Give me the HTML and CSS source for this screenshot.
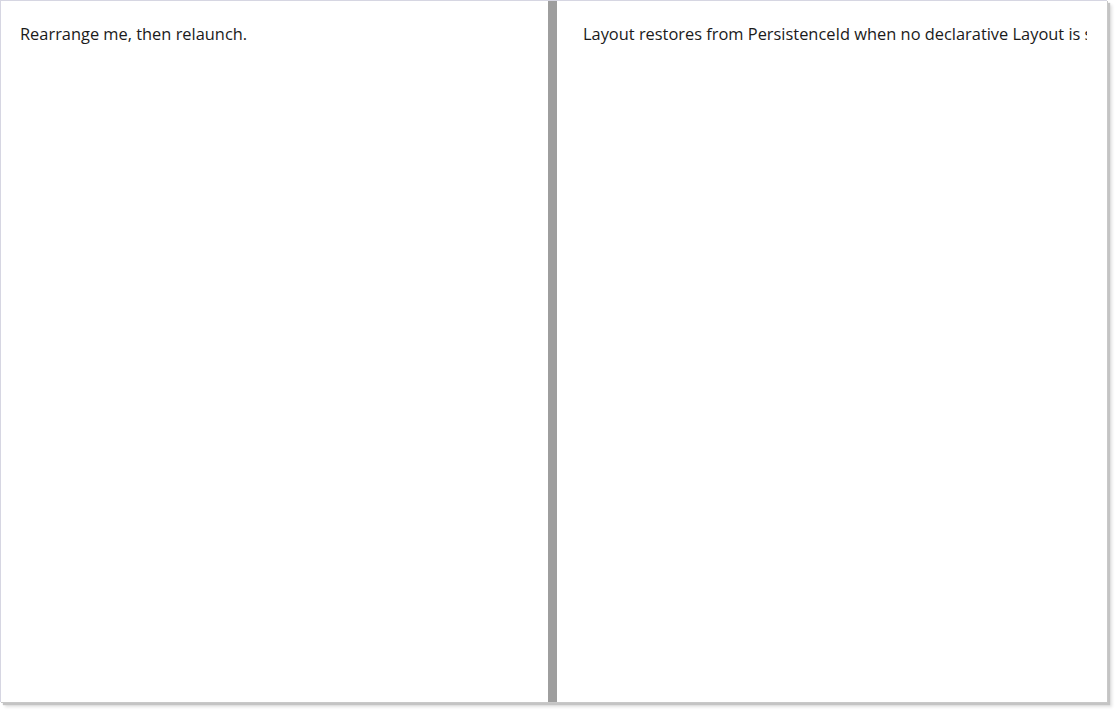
FILE: index.html
```html
<!DOCTYPE html>
<html>
<head>
<meta charset="utf-8">
<link rel="stylesheet" href="styles.css">
</head>
<body>
<div class="window">
  <div class="pane left">
    <div class="text">Rearrange me, then relaunch.</div>
  </div>
  <div class="splitter"></div>
  <div class="pane right">
    <div class="text">Layout restores from PersistenceId when no declarative Layout is set.</div>
  </div>
</div>
</body>
</html>
```
FILE: styles.css
```css
html, body {
  margin: 0;
  padding: 0;
  background: #ffffff;
}
body {
  height: 711px;
  box-sizing: border-box;
  padding-bottom: 9px;
}
.window {
  width: 1106px;
  height: 701px;
  border-top: 1px solid #d6d6e2;
  border-left: 1px solid #d6d6e2;
  background: #ffffff;
  display: flex;
  box-shadow: 1px 1px 0 #c8c8c8, 3px 3px 1px #c4c4c4, 5px 5px 3px rgba(0,0,0,0.12);
  font-family: "Open Sans", "Noto Sans", sans-serif;
  font-size: 16.4px;
  color: #1b1b1b;
}
.pane {
  overflow: hidden;
  box-sizing: border-box;
}
.left {
  width: 547px;
  padding: 22px 19px;
}
.splitter {
  width: 9px;
  background: #9e9e9e;
}
.right {
  flex: 1;
  padding: 22px 20px 22px 26px;
}
.text {
  white-space: nowrap;
  overflow: hidden;
  line-height: 22px;
}
```
